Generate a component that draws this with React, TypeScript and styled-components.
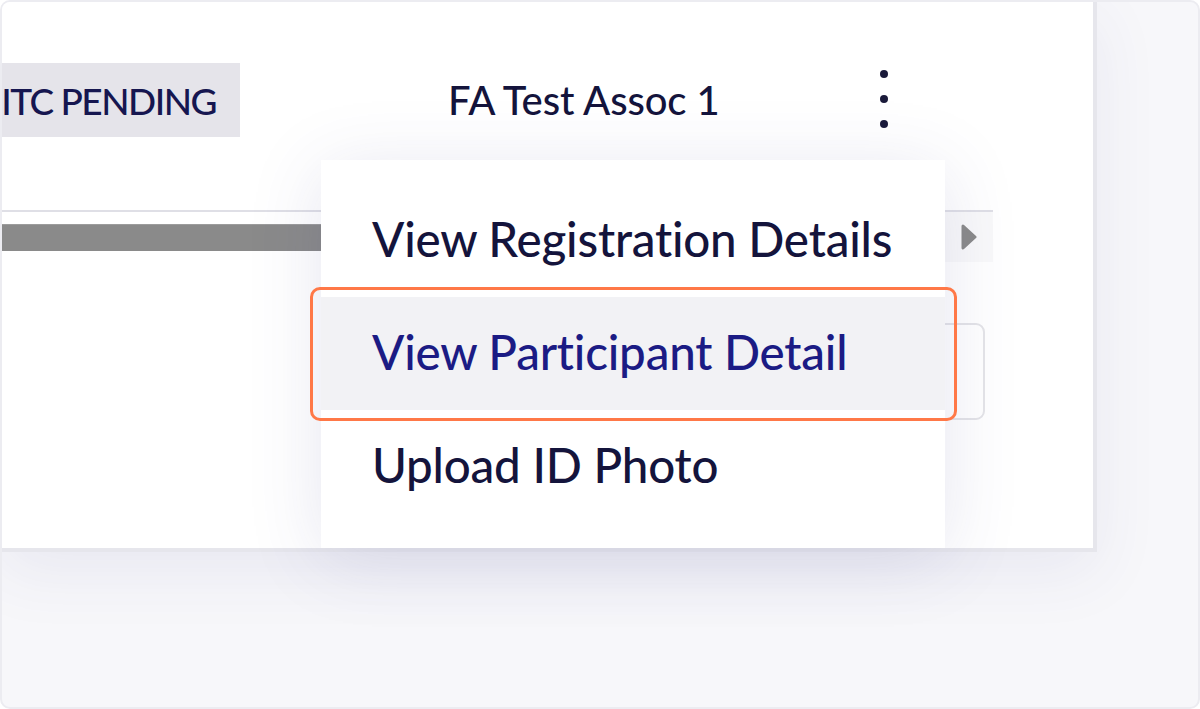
import React from "react";
import styled, { createGlobalStyle } from "styled-components";

const Global = createGlobalStyle`
  html, body { margin: 0; padding: 0; background: #ffffff; }
  body { font-family: Lato, "Open Sans", Arial, sans-serif; }
  * { box-sizing: border-box; }
`;

const Frame = styled.div`
  position: relative;
  width: 1200px;
  height: 709px;
  border: 2px solid #ececf1;
  border-radius: 10px;
  background: #f7f7fa;
  overflow: hidden;
`;

const Panel = styled.div`
  position: relative;
  width: 1097px;
  height: 552px;
  margin: -2px 0 0 -2px;
  padding: 2px 0 0 2px;
  background: #ffffff;
  border-right: 4px solid #e6e6ec;
  border-bottom: 4px solid #e6e6ec;
  box-shadow: 0 20px 60px rgba(70, 70, 140, 0.08);
`;

const Header = styled.div`
  display: flex;
  align-items: center;
  height: 208px;
  padding-bottom: 12px;
`;

const Tag = styled.div`
  display: flex;
  align-items: center;
  justify-content: flex-end;
  width: 238px;
  height: 74px;
  padding-right: 24px;
  background: #e5e4ea;
  color: #161650;
  font-size: 37px;
  font-weight: 500;
  letter-spacing: -1.5px;
  white-space: nowrap;
  overflow: hidden;
`;

const Name = styled.div`
  margin-left: 208px;
  color: #14143c;
  font-size: 40px;
  font-weight: 500;
  letter-spacing: -0.1px;
  white-space: nowrap;
`;

const Kebab = styled.div`
  display: flex;
  flex-direction: column;
  align-items: center;
  gap: 17px;
  margin-left: 160px;
  padding-bottom: 2px;
`;

const Dot = styled.span`
  width: 8px;
  height: 8px;
  border-radius: 50%;
  background: #1a1a3a;
`;

const Divider = styled.div`
  width: 991px;
  height: 2px;
  background: #dfdfe6;
`;

const ScrollRow = styled.div`
  display: flex;
  align-items: stretch;
  width: 991px;
  height: 50px;
`;

const Track = styled.div`
  flex: 1;
  display: flex;
  align-items: center;
`;

const Thumb = styled.div`
  width: 600px;
  height: 27px;
  background: #8a8a8a;
  border-top: 1px solid #9c9c9c;
`;

const ArrowBox = styled.div`
  width: 48px;
  display: flex;
  align-items: center;
  justify-content: center;
  background: #f9f9fa;
`;

const Body = styled.div`
  display: flex;
  justify-content: flex-end;
  width: 983px;
  padding-top: 61px;
`;

const InputBox = styled.div`
  width: 400px;
  height: 97px;
  border: 2px solid #e4e4e8;
  border-radius: 9px;
`;

const Menu = styled.div`
  position: absolute;
  left: 321px;
  top: 160px;
  width: 624px;
  height: 388px;
  padding-top: 24px;
  background: #ffffff;
  box-shadow: 0 10px 70px rgba(60, 60, 140, 0.13);
`;

const Item = styled.div<{ $active?: boolean }>`
  position: relative;
  display: flex;
  align-items: center;
  height: 113px;
  padding-left: 51px;
  padding-bottom: 4px;
  font-size: 47.5px;
  font-weight: 500;
  letter-spacing: -0.2px;
  white-space: nowrap;
  color: ${(p) => (p.$active ? "#1b1b84" : "#14143c")};
  background: ${(p) => (p.$active ? "#f2f2f5" : "transparent")};

  ${(p) =>
    p.$active &&
    `
    &::after {
      content: "";
      position: absolute;
      left: -11px;
      right: -12px;
      top: -10px;
      bottom: -11px;
      border: 3px solid #ff7847;
      border-radius: 10px;
      pointer-events: none;
    }
  `}
`;

export default function App() {
  return (
    <>
      <Global />
      <Frame>
        <Panel>
          <Header>
            <Tag>ITC PENDING</Tag>
            <Name>FA Test Assoc 1</Name>
            <Kebab>
              <Dot />
              <Dot />
              <Dot />
            </Kebab>
          </Header>
          <Divider />
          <ScrollRow>
            <Track>
              <Thumb />
            </Track>
            <ArrowBox>
              <svg width="16" height="26" viewBox="0 0 16 26">
                <path d="M2 2 L14 13 L2 24 Z" fill="#8a8a8a" stroke="#8a8a8a" strokeWidth="3" strokeLinejoin="round" />
              </svg>
            </ArrowBox>
          </ScrollRow>
          <Body>
            <InputBox />
          </Body>
          <Menu>
            <Item>View Registration Details</Item>
            <Item $active>View Participant Detail</Item>
            <Item>Upload ID Photo</Item>
          </Menu>
        </Panel>
      </Frame>
    </>
  );
}
